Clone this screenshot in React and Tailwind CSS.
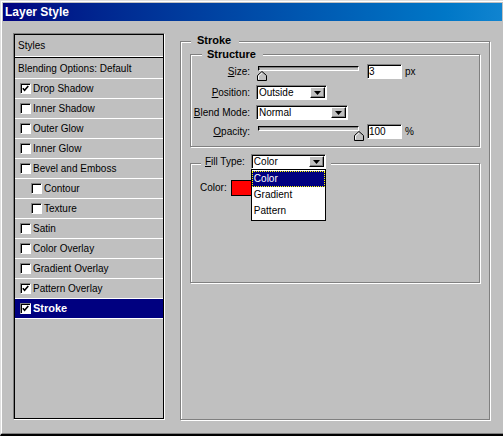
const STYLES = [
  { label: 'Drop Shadow', checked: true },
  { label: 'Inner Shadow' },
  { label: 'Outer Glow' },
  { label: 'Inner Glow' },
  { label: 'Bevel and Emboss' },
  { label: 'Contour', indent: true },
  { label: 'Texture', indent: true },
  { label: 'Satin' },
  { label: 'Color Overlay' },
  { label: 'Gradient Overlay' },
  { label: 'Pattern Overlay', checked: true },
  { label: 'Stroke', checked: true, selected: true },
];

const sunken =
  'border border-t-[#808080] border-l-[#808080] border-b-white border-r-white shadow-[inset_1px_1px_0_#000]';
const etched =
  'border border-[#808080] shadow-[inset_1px_1px_0_#fff,1px_1px_0_#fff]';

function CheckBox({ checked }) {
  return (
    <span className={`w-[11px] h-[11px] shrink-0 bg-white flex items-center justify-center ${sunken}`}>
      {checked && (
        <svg width="7" height="7" viewBox="0 0 7 7">
          <polyline points="0.8,3.2 2.6,5.2 6.3,1" fill="none" stroke="#000" strokeWidth="1.6" />
        </svg>
      )}
    </span>
  );
}

function DropButton() {
  return (
    <span className="w-[15px] h-[11px] mr-px bg-[#c0c0c0] border border-t-white border-l-white border-b-black border-r-black shadow-[inset_-1px_-1px_0_#808080] flex items-center justify-center">
      <svg width="7" height="4" viewBox="0 0 7 4">
        <polygon points="0,0 7,0 3.5,4" fill="#000" />
      </svg>
    </span>
  );
}

function Select({ value, width }) {
  return (
    <div className={`h-[15px] bg-white flex items-center justify-between ${sunken}`} style={{ width }}>
      <span className="pl-[2px] leading-none">{value}</span>
      <DropButton />
    </div>
  );
}

function Slider({ thumbLeft }) {
  return (
    <div className="relative w-[104px] h-[15px]">
      <div className="mt-[4px] ml-[2px] w-[101px] h-[5px] bg-[#c0c0c0] border border-t-black border-l-black border-b-white border-r-white shadow-[inset_1px_1px_0_#808080]" />
      <svg className="absolute top-[5px]" style={{ left: thumbLeft }} width="10" height="10" viewBox="0 0 10 10">
        <polygon points="0.5,9.5 0.5,4.5 5,0.5 9.5,4.5 9.5,9.5" fill="#c0c0c0" stroke="#000" />
        <polyline points="1.5,8.5 1.5,5 5,1.8" fill="none" stroke="#fff" />
      </svg>
    </div>
  );
}

function TextBox({ value }) {
  return (
    <div className={`w-[35px] h-[15px] bg-white flex items-center px-[1px] ${sunken}`}>
      <span className="leading-none">{value}</span>
    </div>
  );
}

function Label({ hot, rest }) {
  return (
    <span className="w-[59px] shrink-0 text-right leading-none">
      <span className="underline underline-offset-1">{hot}</span>
      {rest}
    </span>
  );
}

export default function App() {
  return (
    <div className="w-[503px] h-[436px] bg-[#c0c0c0] border-t border-l border-b-2 border-t-[#dfdfdf] border-l-[#dfdfdf] border-b-black font-['Liberation_Sans',Arial,sans-serif] text-[10px] text-black overflow-hidden">
      <div className="h-full border-t border-l border-b border-t-white border-l-white border-b-[#808080]">
        {/* title bar */}
        <div className="mt-px mx-px h-[18px] bg-linear-to-r from-[#000080] to-[#1084d0] flex items-center pl-[2px]">
          <span className="text-white font-bold text-[12px] leading-none">Layer Style</span>
        </div>

        <div className="flex mt-[12px] ml-[11px]">
          {/* styles list */}
          <div className="w-[152px] h-[387px] border border-t-[#808080] border-l-[#808080] border-b-white border-r-white">
            <div className="h-full border border-black">
              <div className="h-[22px] border-b border-white flex items-center pl-[3px]">Styles</div>
              <div className="h-px bg-black" />
              <div className="h-[21px] border-b border-white flex items-center pl-[3px]">Blending Options: Default</div>
              {STYLES.map((s) => (
                <div
                  key={s.label}
                  className={`h-[20px] border-b border-white flex items-center gap-[2px] ${s.indent ? 'pl-[16px]' : 'pl-[5px]'} ${s.selected ? 'bg-[#000080] text-white font-bold text-[11px]' : ''}`}
                >
                  <CheckBox checked={s.checked} />
                  <span className="leading-none">{s.label}</span>
                </div>
              ))}
            </div>
          </div>

          {/* stroke panel */}
          <div className={`relative ml-[15px] mt-[8px] w-[310px] h-[379px] ${etched}`}>
            <span className="absolute left-[10px] top-[-8px] pl-[6px] pr-[8px] bg-[#c0c0c0] font-bold text-[11px] leading-[13px]">Stroke</span>

            {/* structure */}
            <div className={`relative ml-[9px] mt-[12px] w-[290px] h-[93px] pt-[9px] ${etched}`}>
              <span className="absolute left-[11px] top-[-7px] pl-[5px] pr-[7px] bg-[#c0c0c0] font-bold text-[11px] leading-[13px]">Structure</span>

              <div className="flex items-center h-[15px]">
                <Label hot="S" rest="ize:" />
                <div className="ml-[6px]"><Slider thumbLeft={1} /></div>
                <div className="ml-[7px]"><TextBox value="3" /></div>
                <span className="ml-[3px] leading-none">px</span>
              </div>
              <div className="flex items-center h-[15px] mt-[6px]">
                <Label hot="P" rest="osition:" />
                <div className="ml-[6px]"><Select value="Outside" width={71} /></div>
              </div>
              <div className="flex items-center h-[15px] mt-[5px]">
                <Label hot="B" rest="lend Mode:" />
                <div className="ml-[6px]"><Select value="Normal" width={92} /></div>
              </div>
              <div className="flex items-center h-[15px] mt-[4px]">
                <Label hot="O" rest="pacity:" />
                <div className="ml-[6px]"><Slider thumbLeft={98} /></div>
                <div className="ml-[7px]"><TextBox value="100" /></div>
                <span className="ml-[3px] leading-none">%</span>
              </div>
            </div>

            {/* fill type */}
            <div className={`relative ml-[9px] mt-[16px] w-[290px] h-[120px] pt-[16px] pl-[9px] ${etched}`}>
              <div className="flex items-center h-[16px]">
                <span className="leading-none">Color:</span>
                <span className="ml-[4px] w-[30px] h-[16px] bg-[#ff0000] border border-black" />
              </div>

              <div className="absolute left-[10px] top-[-10px] flex items-center h-[15px] pl-[4px] pr-[5px] bg-[#c0c0c0]">
                <span className="leading-none">
                  <span className="underline underline-offset-1">F</span>ill Type:
                </span>
                <div className="relative ml-[6px]">
                  <Select value="Color" width={75} />
                  <div className="absolute left-0 top-[15px] w-[75px] bg-white border border-black flex flex-col py-px z-10">
                    <div className="h-[16px] bg-[#000080] text-white border border-dotted border-[#ffff00] flex items-center pl-px leading-none">Color</div>
                    <div className="h-[16px] flex items-center pl-[2px] leading-none">Gradient</div>
                    <div className="h-[16px] flex items-center pl-[2px] leading-none">Pattern</div>
                  </div>
                </div>
              </div>
            </div>
          </div>
        </div>
      </div>
    </div>
  );
}
